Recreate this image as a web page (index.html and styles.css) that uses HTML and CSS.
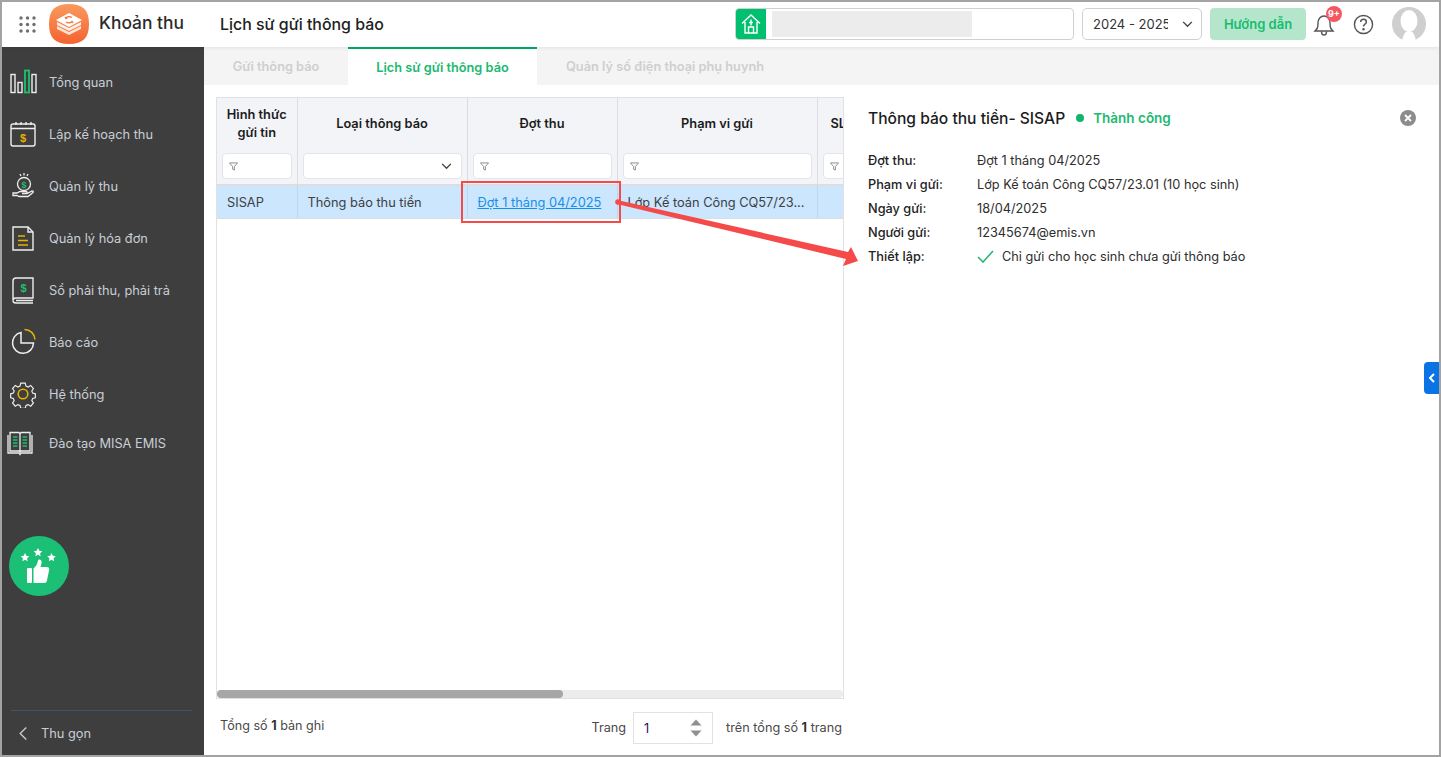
FILE: index.html
```html
<!DOCTYPE html>
<html lang="vi">
<head>
<meta charset="utf-8">
<title>Lịch sử gửi thông báo</title>
<link rel="stylesheet" href="styles.css">
</head>
<body>
<div class="frame">
  <header class="topbar">
    <svg class="apps" viewBox="0 0 17 17" width="17" height="17"><g fill="#6f6f6f"><circle cx="2" cy="2" r="1.7"/><circle cx="8.5" cy="2" r="1.7"/><circle cx="15" cy="2" r="1.7"/><circle cx="2" cy="8.5" r="1.7"/><circle cx="8.5" cy="8.5" r="1.7"/><circle cx="15" cy="8.5" r="1.7"/><circle cx="2" cy="15" r="1.7"/><circle cx="8.5" cy="15" r="1.7"/><circle cx="15" cy="15" r="1.7"/></g></svg>
    <svg class="logo" viewBox="0 0 40 40" width="40" height="40">
      <defs><linearGradient id="lg" x1="0" y1="0" x2="0" y2="1"><stop offset="0" stop-color="#f99a5e"/><stop offset="1" stop-color="#f4622f"/></linearGradient></defs>
      <path d="M20 0C34 0 40 6 40 20S34 40 20 40 0 34 0 20 6 0 20 0Z" fill="url(#lg)"/>
      <path d="M8 22l12 6 12-6v3l-12 6-12-6Z" fill="#fde3d3"/>
      <path d="M8 18l12 6 12-6v3l-12 6-12-6Z" fill="#fff0e6"/>
      <path d="M20 9l13 7-13 7-13-7Z" fill="#fff"/>
      <path d="M23 13.5c-2-1.2-5-1-6 .3M17 18c2 1.2 5 1 6-.3M16 13l1 1.500 1.500-1M24 19l-1-1.500-1.500 1" stroke="#f4703a" stroke-width="1.300" fill="none"/>
    </svg>
    <div class="appname">Khoản thu</div>
    <div class="pagetitle">Lịch sử gửi thông báo</div>
    <div class="school">
      <span class="school-icon">
        <svg viewBox="0 0 22 22" width="22" height="22" fill="none" stroke="#fff" stroke-width="1.400"><path d="M2 10.500 11 2l9 8.500M5 9v11h12V9"/><path d="M8.500 20v-6h5v6M9 9.500h4M11 6.500v6"/></svg>
      </span>
      <span class="school-blur"></span>
    </div>
    <div class="year">
      <span class="year-text">2024 - 2025</span>
      <svg viewBox="0 0 12 8" width="11" height="7" fill="none" stroke="#444" stroke-width="1.600"><path d="M1 1l5 5 5-5"/></svg>
    </div>
    <button class="guide">Hướng dẫn</button>
    <div class="bell">
      <svg viewBox="0 0 24 26" width="24" height="26" fill="none" stroke="#555" stroke-width="1.400"><path d="M3 20c2-2 3-3 3-8 0-4 2.500-7 6-7s6 3 6 7c0 5 1 6 3 8Z"/><path d="M9.500 20.500c0 2 1 3.500 2.500 3.500s2.500-1.500 2.500-3.500"/></svg>
      <span class="badge">9+</span>
    </div>
    <svg class="help" viewBox="0 0 22 22" width="21" height="21" fill="none" stroke="#555" stroke-width="1.500"><circle cx="11" cy="11" r="9.500"/><path d="M8 8.500c0-1.800 1.300-3 3-3s3 1.200 3 2.800c0 2.300-3 2.400-3 4.700"/><circle cx="11" cy="16" r=".6" fill="#555"/></svg>
    <svg class="avatar" viewBox="0 0 34 34" width="34" height="34"><ellipse cx="17" cy="17" rx="17" ry="17" fill="#cfcfcf"/><ellipse cx="17" cy="14" rx="8.500" ry="11" fill="#fff"/><path d="M10 34c1-6 3-10 7-10s6 4 7 10Z" fill="#fff"/></svg>
  </header>

  <div class="body">
    <aside class="sidebar">
      <nav class="nav">
        <a class="nav-item">
          <svg class="nav-icon" viewBox="0 0 28 28" fill="none" stroke="#eee" stroke-width="1.400"><rect x="2" y="6.500" width="4" height="18"/><rect x="9" y="14.500" width="4" height="10"/><rect x="16" y="2.500" width="4" height="22" stroke="#1fbf6f" stroke-width="1.800"/><rect x="23" y="6.500" width="4" height="18"/></svg>
          <span>Tổng quan</span>
        </a>
        <a class="nav-item">
          <svg class="nav-icon" viewBox="0 0 28 28" fill="none" stroke="#eee" stroke-width="1.400"><rect x="2" y="4" width="24" height="22" rx="2"/><path d="M2 8.500h24M7 2v3M12 2v3M17 2v3M22 2v3"/><text x="14" y="22" text-anchor="middle" class="dollar dollar-y">$</text></svg>
          <span>Lập kế hoạch thu</span>
        </a>
        <a class="nav-item">
          <svg class="nav-icon" viewBox="0 0 28 28" fill="none" stroke="#eee" stroke-width="1.300"><circle cx="15" cy="12" r="6.500"/><text x="15" y="15.500" text-anchor="middle" class="dollar dollar-g small">$</text><path d="M15 1v2.500M11 2l1 2M19 2l-1 2"/><path d="M4 21h4l3-1.500h6c1.500 0 1.500 2 0 2h-4 5l5-2.500c1.500 0 1.500 1 1 1.500l-5 4H10l-2-1H4Z"/></svg>
          <span>Quản lý thu</span>
        </a>
        <a class="nav-item">
          <svg class="nav-icon" viewBox="0 0 28 28" fill="none" stroke="#eee" stroke-width="1.400"><path d="M4 3h15l5 5v18H4Z"/><path d="M19 3v5h5"/><path d="M9 12h7M9 16.500h10M9 21h10" stroke="#e5b300" stroke-width="1.600"/></svg>
          <span>Quản lý hóa đơn</span>
        </a>
        <a class="nav-item">
          <svg class="nav-icon" viewBox="0 0 28 28" fill="none" stroke="#eee" stroke-width="1.400"><path d="M7 2h17v20H7c-2 0-3 1-3 2.500V5c0-2 1-3 3-3Z"/><path d="M4 24.500C4 26 5 27 7 27h17M7 24.500h17"/><text x="14.500" y="16" text-anchor="middle" class="dollar dollar-g">$</text></svg>
          <span>Sổ phải thu, phải trả</span>
        </a>
        <a class="nav-item">
          <svg class="nav-icon" viewBox="0 0 28 28" fill="none" stroke="#eee" stroke-width="1.500"><path d="M12 4.500A10.500 10.500 0 1 0 24.500 15H12Z"/><path d="M15.500 1.500A10.500 10.500 0 0 1 26 11.500" stroke="#e5b300"/></svg>
          <span>Báo cáo</span>
        </a>
        <a class="nav-item">
          <svg class="nav-icon" viewBox="0 0 28 28" fill="none" stroke="#eee" stroke-width="1.300"><path d="M11.500 2h5l.8 3.200 2.400 1 2.900-1.700 3 3.500-1.800 2.700.9 2.300 3 .8v4.400l-3 .8-.9 2.300 1.800 2.700-3 3.500-2.900-1.700-2.400 1-.8 3h-5l-.8-3-2.400-1-2.900 1.700-3-3.500 1.800-2.700-.9-2.300-3-.8v-4.400l3-.8.900-2.300L2.400 8l3-3.500 2.900 1.700 2.400-1Z" transform="translate(1.400 1.400) scale(.9)"/><circle cx="14" cy="14" r="4.800" stroke="#e5b300" stroke-width="1.600"/></svg>
          <span>Hệ thống</span>
        </a>
        <a class="nav-item nav-last">
          <svg class="nav-icon nav-icon-book" viewBox="0 0 28 28" fill="none" stroke="#eee" stroke-width="1.300"><path d="M2 6v18h11l1 1.500 1-1.500h11V6"/><path d="M4 3.500h9l1 1.500 1-1.500h9V22h-9l-1 1-1-1H4ZM14 5v18"/><path d="M7 8h4.500M7 11h4.500M7 14h4.500M7 17h4.500M16.500 8H21M16.500 11H21M16.500 14H21M16.500 17H21" stroke="#1fbf6f" stroke-width="1.500"/></svg>
          <span>Đào tạo MISA EMIS</span>
        </a>
      </nav>
      <div class="rate">
        <svg viewBox="0 0 60 60" width="60" height="60" fill="#fff">
          <path d="M16 17l1.300 2.800 3 .4-2.200 2.100.5 3-2.600-1.500-2.600 1.500.5-3-2.200-2.100 3-.4Z"/>
          <path d="M29 12l1.300 2.800 3 .4-2.200 2.100.5 3-2.600-1.500-2.600 1.500.5-3-2.200-2.100 3-.4Z"/>
          <path d="M42.500 17l1.300 2.800 3 .4-2.200 2.100.5 3-2.600-1.500-2.600 1.500.5-3-2.200-2.100 3-.4Z"/>
          <rect x="18" y="32" width="5" height="15" rx="1"/>
          <path d="M24.500 32.500c2.500-2 4-5 4.500-8 .2-1.500 3.500-1.500 3.600 1.500.1 1.500-.6 3.500-1.100 5h6.500c1.600 0 2.500 1.200 2.200 2.700l-2.300 11c-.3 1.300-1.200 2.300-2.700 2.300H24.500Z"/>
        </svg>
      </div>
      <div class="collapse">
        <svg viewBox="0 0 10 16" width="10" height="15" fill="none" stroke="#c4c8d0" stroke-width="1.500"><path d="M8.500 1.500 2 8l6.500 6.500"/></svg>
        <span>Thu gọn</span>
      </div>
    </aside>

    <main class="main">
      <div class="tabs">
        <div class="tab tab-first">Gửi thông báo</div>
        <div class="tab tab-active">Lịch sử gửi thông báo</div>
        <div class="tab tab-rest">Quản lý số điện thoại phụ huynh</div>
      </div>
      <div class="content">
        <section class="list">
          <div class="grid-wrap">
            <div class="grid-scroll">
              <table class="grid">
                <colgroup><col class="c1"><col class="c2"><col class="c3"><col class="c4"><col class="c5"></colgroup>
                <thead>
                  <tr class="head-row">
                    <th>Hình thức<br>gửi tin</th>
                    <th>Loại thông báo</th>
                    <th>Đợt thu</th>
                    <th>Phạm vi gửi</th>
                    <th class="th-left">SL</th>
                  </tr>
                  <tr class="filter-row">
                    <th><div class="filter"><svg class="funnel" viewBox="0 0 10 10" width="9" height="9" fill="none" stroke="#777" stroke-width=".9"><path d="M.5 1h9L6 5v4L4 8V5Z"/></svg></div></th>
                    <th><div class="filter filter-select"><svg viewBox="0 0 12 8" width="11" height="7" fill="none" stroke="#444" stroke-width="1.600"><path d="M1 1l5 5 5-5"/></svg></div></th>
                    <th><div class="filter"><svg class="funnel" viewBox="0 0 10 10" width="9" height="9" fill="none" stroke="#777" stroke-width=".9"><path d="M.5 1h9L6 5v4L4 8V5Z"/></svg></div></th>
                    <th><div class="filter"><svg class="funnel" viewBox="0 0 10 10" width="9" height="9" fill="none" stroke="#777" stroke-width=".9"><path d="M.5 1h9L6 5v4L4 8V5Z"/></svg></div></th>
                    <th><div class="filter filter-cut"><svg class="funnel" viewBox="0 0 10 10" width="9" height="9" fill="none" stroke="#777" stroke-width=".9"><path d="M.5 1h9L6 5v4L4 8V5Z"/></svg></div></th>
                  </tr>
                </thead>
                <tbody>
                  <tr class="data-row">
                    <td>SISAP</td>
                    <td>Thông báo thu tiền</td>
                    <td><a class="link">Đợt 1 tháng 04/2025</a></td>
                    <td>Lớp Kế toán Công CQ57/23...</td>
                    <td></td>
                  </tr>
                </tbody>
              </table>
            </div>
            <div class="hscroll"><div class="hthumb"></div></div>
          </div>
          <div class="pager">
            <div class="total">Tổng số <b>1</b> bản ghi</div>
            <div class="pages">
              <span>Trang</span>
              <div class="page-input">
                <span class="page-num">1</span>
                <svg viewBox="0 0 12 20" width="12" height="20" fill="#8f8f8f"><path d="M6 1.500 11.500 7.500H.5ZM6 18.500.5 12.500h11Z"/></svg>
              </div>
              <span class="pages-of">trên tổng số <b>1</b> trang</span>
            </div>
          </div>
        </section>

        <section class="detail">
          <div class="detail-head">
            <h2>Thông báo thu tiền- SISAP</h2>
            <span class="status"><i class="status-dot"></i>Thành công</span>
            <svg class="close" viewBox="0 0 16 16" width="16" height="16"><circle cx="8" cy="8" r="8" fill="#8c8c8c"/><path d="M5 5l6 6M11 5l-6 6" stroke="#fff" stroke-width="1.800"/></svg>
          </div>
          <dl class="info">
            <dt>Đợt thu:</dt><dd>Đợt 1 tháng 04/2025</dd>
            <dt>Phạm vi gửi:</dt><dd>Lớp Kế toán Công CQ57/23.01 (10 học sinh)</dd>
            <dt>Ngày gửi:</dt><dd>18/04/2025</dd>
            <dt>Người gửi:</dt><dd>12345674@emis.vn</dd>
            <dt>Thiết lập:</dt>
            <dd class="setting"><svg viewBox="0 0 17 13" width="17" height="13" fill="none" stroke="#2cb673" stroke-width="1.600"><path d="M1 7l5 5L16 1"/></svg>Chỉ gửi cho học sinh chưa gửi thông báo</dd>
          </dl>
        </section>
      </div>
    </main>
  </div>

  <div class="side-toggle"><svg viewBox="0 0 6 10" width="6" height="10" fill="none" stroke="#fff" stroke-width="2"><path d="M5 1 1 5l4 4"/></svg></div>
  <div class="callout"></div>
  <svg class="arrow" viewBox="0 0 260 80" width="260" height="80">
    <circle cx="3" cy="3" r="2.800" fill="#f44a4a"/>
    <path d="M2 1 233 53 236 48 243 62 228 67 231 60 2 5Z" fill="#f44a4a"/>
  </svg>
</div>
</body>
</html>
```

FILE: styles.css
```css
* { box-sizing: border-box; }
html, body { margin: 0; padding: 0; height: 100%; overflow: hidden; }
body { font-family: Inter, "Liberation Sans", sans-serif; font-size: 12.800px; color: #212121; background: #fff; }

.frame { position: relative; width: 1441px; height: 757px; border: 2px solid #a3a3a3; display: flex; flex-direction: column; overflow: hidden; background: #fff; }

/* top bar */
.topbar { flex: none; height: 45px; display: flex; align-items: center; position: relative; z-index: 2; background: #fff; box-shadow: 0 1px 4px rgba(0,0,0,.08); padding: 0 0 1px 17px; }
.apps { flex: none; }
.logo { flex: none; margin-left: 13px; }
.appname { flex: none; width: 121px; margin-left: 10px; font-size: 17.400px; font-weight: 500; color: #2b2b2b; margin-bottom: 3px; }
.pagetitle { flex: none; width: 515px; font-size: 15.900px; font-weight: 500; color: #212121; }
.school { flex: none; width: 339px; height: 32px; border: 1px solid #d0d0d0; border-radius: 4px; display: flex; align-items: center; overflow: hidden; }
.school-icon { width: 31px; height: 32px; margin-left: -1px; background: #00bf6f; display: flex; align-items: center; justify-content: center; flex: none; }
.school-blur { width: 200px; height: 26px; margin-left: 6px; background: #ececec; }
.year { flex: none; width: 120px; height: 32px; margin-left: 8px; border: 1px solid #d0d0d0; border-radius: 5px; display: flex; align-items: center; justify-content: space-between; padding: 0 8px 0 10px; }
.year-text { width: 75px; overflow: hidden; white-space: nowrap; font-size: 13px; color: #333; }
.guide { flex: none; width: 96px; height: 32px; margin-left: 8px; background: #b5e6cc; color: #16bd70; border: 0; border-radius: 4px; font: 600 13px Inter, sans-serif; padding: 0; }
.bell { flex: none; position: relative; width: 24px; height: 26px; margin-left: 6px; }
.badge { position: absolute; left: 14px; top: -5px; width: 16px; height: 16px; border-radius: 50%; background: #f4595f; color: #fff; font-size: 9px; font-weight: 700; line-height: 16px; text-align: center; }
.help { flex: none; margin-left: 17px; }
.avatar { flex: none; margin-left: 18px; }

.body { flex: 1; display: flex; min-height: 0; }

/* sidebar */
.sidebar { flex: none; width: 202px; background: #3e3e3e; display: flex; flex-direction: column; color: #c9ced6; }
.nav { padding-top: 9px; display: flex; flex-direction: column; }
.nav-item { height: 52px; display: flex; align-items: center; padding-left: 7px; font-size: 12.800px; gap: 12px; white-space: nowrap; }
.nav-last { height: 46px; padding-left: 4px; gap: 15px; }
.nav-icon { width: 28px; height: 28px; flex: none; }
.dollar { font: 700 11px "Liberation Sans", sans-serif; stroke: none; }
.dollar-y { fill: #e5b300; }
.dollar-g { fill: #1fbf6f; }
.small { font-size: 9px; }
.rate { width: 60px; height: 60px; margin: 70px 0 0 7px; border-radius: 50%; background: #1cbf76; }
.collapse { margin: auto 12px 0 9px; height: 45px; border-top: 1px solid #465266; display: flex; align-items: center; gap: 13px; padding-left: 7px; }

/* main */
.main { flex: 1; min-width: 0; display: flex; flex-direction: column; }
.tabs { flex: none; height: 38px; display: flex; background: #f4f4f4; font-weight: 600; color: #cfcfcf; font-size: 12.750px; }
.tab { display: flex; align-items: center; justify-content: center; }
.tab-first { width: 144px; }
.tab-active { width: 189px; background: #fff; color: #1cb971; border-top: 2px solid #00ad67; }
.tab-rest { padding-left: 29px; }
.content { flex: 1; display: flex; min-height: 0; }

/* list */
.list { flex: none; width: 640px; padding: 12px 0 0 12px; display: flex; flex-direction: column; }
.grid-wrap { height: 602px; border: 1px solid #e0e0e6; display: flex; flex-direction: column; width: 628px; }
.grid-scroll { flex: 1; overflow: hidden; min-height: 0; }
.grid { table-layout: fixed; border-collapse: collapse; width: 700px; }
.c1 { width: 80px; } .c2 { width: 170px; } .c3 { width: 150px; } .c4 { width: 200px; } .c5 { width: 100px; }
.grid th { background: #f3f4f8; border-right: 1px solid #dcdde3; font-weight: 600; font-size: 12.800px; color: #1c1c1c; padding: 0 5px; text-align: center; line-height: 18px; }
.grid .th-left { text-align: left; padding-left: 13px; }
.head-row { height: 52px; }
.filter-row { height: 35px; }
.filter-row th { border-bottom: 2px solid #dcdde3; vertical-align: top; padding-top: 3px; padding-bottom: 3px; }
.filter { height: 26px; background: #fff; border: 1px solid #e4e5ea; border-radius: 4px; display: flex; align-items: center; padding-left: 6px; }
.filter-select { justify-content: flex-end; padding-right: 9px; }
.data-row { height: 33px; background: #cbe6fd; }
.data-row td { padding: 2px 10px 0; border-right: 1px solid #bfd6ea; border-bottom: 1px solid #dcdde3; color: #3c3f44; white-space: nowrap; overflow: hidden; }
.link { color: #1590ea; text-decoration: underline; }
.hscroll { flex: none; height: 8px; background: #ececec; border-radius: 4px; }
.hthumb { width: 346px; height: 8px; background: #a6a6a6; border-radius: 4px; }

.pager { flex: 1; display: flex; align-items: flex-start; justify-content: space-between; width: 628px; padding-left: 4px; }
.total { margin-top: 19px; color: #4a4a4a; font-size: 12.600px; }
.total b, .pages b { font-weight: 700; color: #333; }
.pages { display: flex; align-items: center; margin-top: 13px; font-size: 12.700px; color: #4a4a4a; margin-right: 2px; }
.pages > span { margin-bottom: 1px; }
.page-input { width: 80px; height: 32px; margin-left: 7px; border: 1px solid #e2e2e2; display: flex; align-items: center; justify-content: space-between; padding: 0 10px; }
.page-num { color: #2b0a55; }
.pages-of { margin-left: 13px; }

/* detail */
.detail { flex: 1; min-width: 0; padding: 22px 23px 0 24px; }
.detail-head { display: flex; align-items: center; height: 22px; }
.detail-head h2 { margin: 0; font-size: 15.600px; font-weight: 500; color: #1c1c1c; }
.status { display: flex; align-items: center; margin-left: 11px; color: #1cb971; font-weight: 600; font-size: 13.500px; }
.status-dot { width: 8px; height: 8px; border-radius: 50%; background: #10b56a; margin-right: 9px; }
.close { margin-left: auto; }
.info { display: grid; grid-template-columns: 109px 1fr; grid-auto-rows: 24px; align-items: center; margin: 19px 0 0; font-size: 12.750px; }
.info dt { font-weight: 500; color: #222; }
.info dd { margin: 0; color: #2e2e2e; }
.setting { display: flex; align-items: center; gap: 8px; }

/* overlays */
.side-toggle { position: absolute; right: 0; top: 360px; width: 15px; height: 32px; background: #0b74e5; border-radius: 4px 0 0 4px; display: flex; align-items: center; justify-content: center; }
.callout { position: absolute; left: 459px; top: 179px; width: 160px; height: 42px; border: 2px solid #f44a4a; }
.arrow { position: absolute; left: 613px; top: 197px; }
```
